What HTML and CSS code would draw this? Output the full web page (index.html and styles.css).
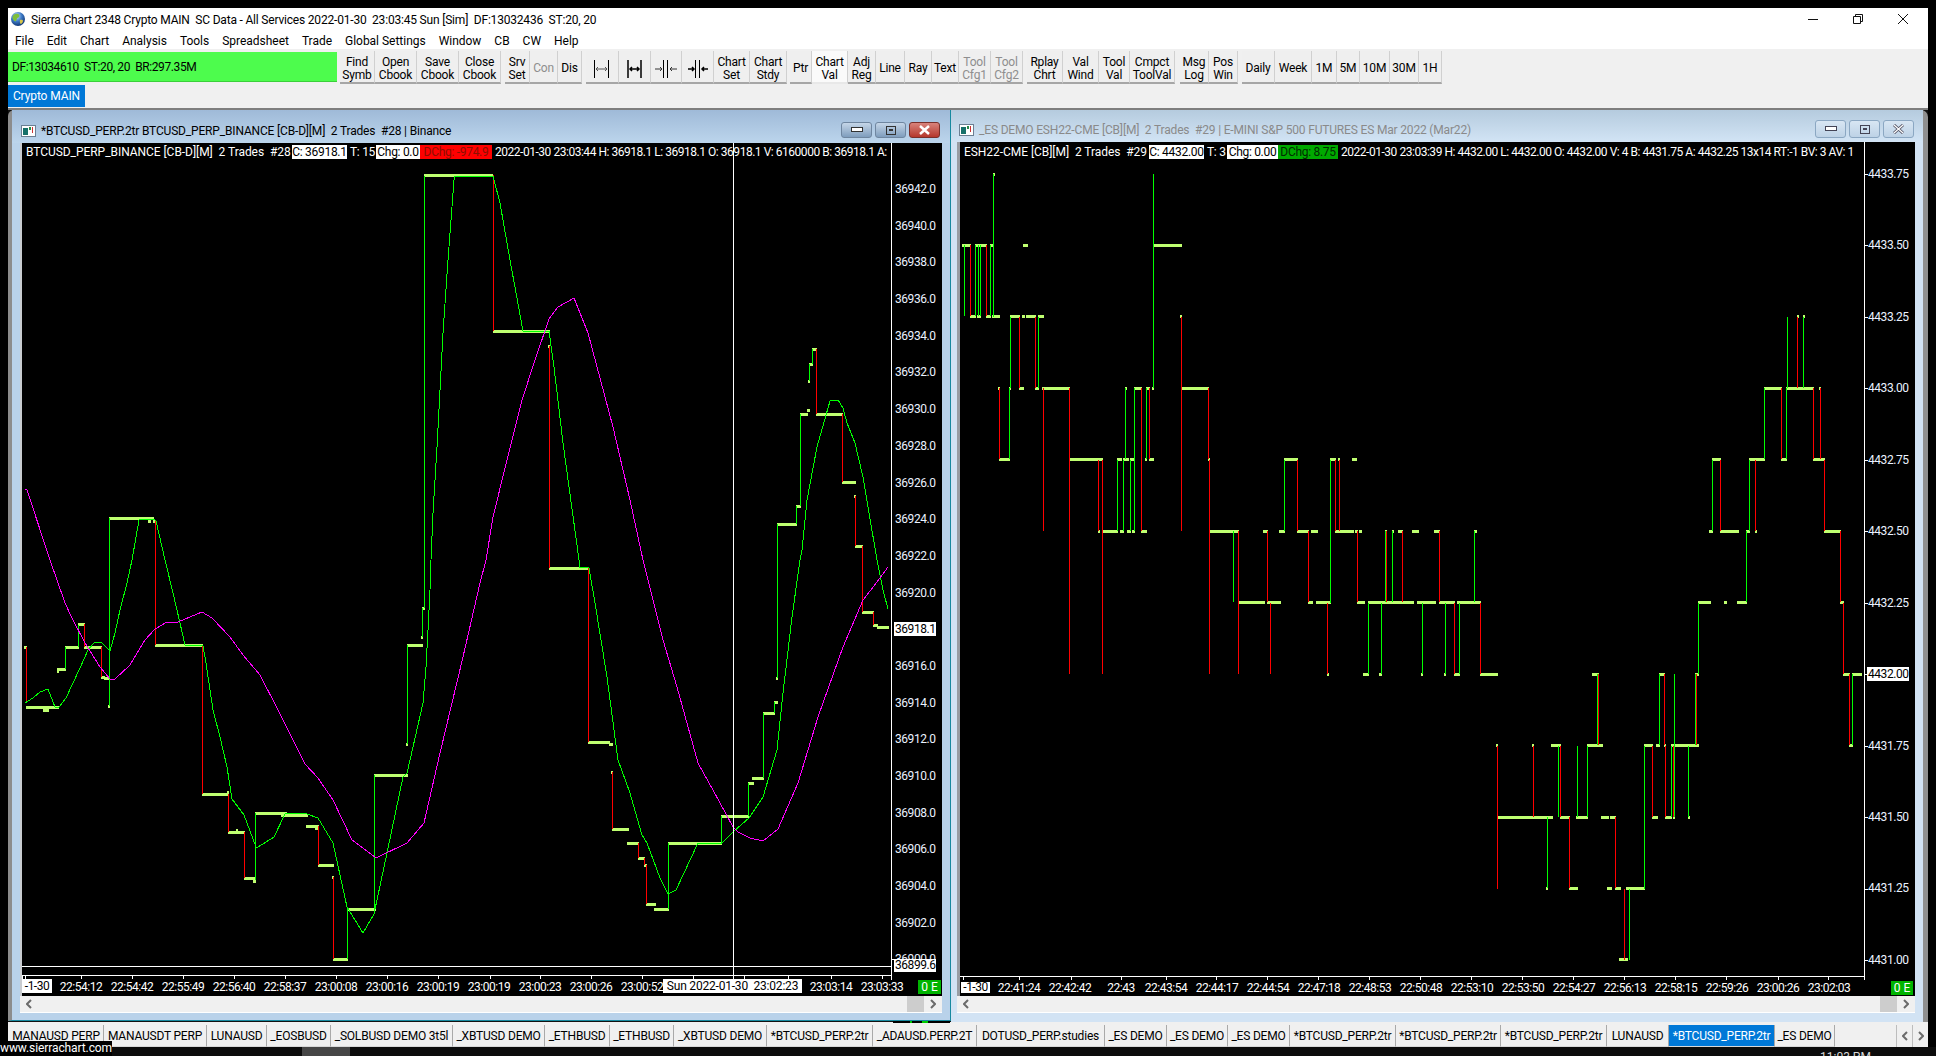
FILE: index.html
```html
<!DOCTYPE html>
<html lang="en">
<head>
<meta charset="utf-8">
<title>Sierra Chart</title>
<link rel="stylesheet" href="styles.css">
</head>
<body>
<div class="app">
  <header class="titlebar">
    <svg class="globe" viewBox="0 0 14 14" width="14" height="14"><defs><radialGradient id="gl" cx="40%" cy="30%" r="75%"><stop offset="0" stop-color="#cfe8ff"/><stop offset=".5" stop-color="#3b78c4"/><stop offset="1" stop-color="#0d2f6b"/></radialGradient></defs><circle cx="7" cy="7" r="7" fill="url(#gl)"/><path d="M3 2.500c2-1 4-1 5 0 1 1.500 0 3-1.500 3.500-1 .5-.5 2.500-2 3.500C3 9 1.500 7 1.500 5.500 1.500 4.500 2 3.500 3 2.500z" fill="#7fbf3a"/><path d="M9 8c1.500-.5 3 0 3 1s-1.500 3-2.500 3C9 11 8.500 9 9 8z" fill="#d8c64a"/></svg>
    <span class="app-title">Sierra Chart 2348 Crypto MAIN  SC Data - All Services 2022-01-30  23:03:45 Sun [Sim]  DF:13032436  ST:20, 20</span>
    <div class="winctl">
      <svg class="wc wc-min" viewBox="0 0 10 10" width="10" height="10"><path d="M0 5.500h10" /></svg>
      <svg class="wc wc-max" viewBox="0 0 10 10" width="10" height="10"><path d="M.5 2.500h7v7h-7zM2.500 2.500v-2h7v7h-2" /></svg>
      <svg class="wc wc-x" viewBox="0 0 10 10" width="10" height="10"><path d="M0 0l10 10M10 0L0 10" /></svg>
    </div>
  </header>
  <nav class="menubar">
    <span>File</span><span>Edit</span><span>Chart</span><span>Analysis</span><span>Tools</span><span>Spreadsheet</span><span>Trade</span><span>Global Settings</span><span>Window</span><span>CB</span><span>CW</span><span>Help</span>
  </nav>
  <section class="toolarea">
    <div class="toolbar">
      <div class="status">DF:13034610  ST:20, 20  BR:297.35M</div><i></i>
      <button>Find<br>Symb</button><button>Open<br>Cbook</button><button>Save<br>Cbook</button><button>Close<br>Cbook</button><i></i>
      <button>Srv<br>Set</button><button class="off">Con</button><button>Dis</button><i></i>
      <button><svg class="tb" viewBox="0 0 20 18" width="20" height="18"><path d="M2.500 0v18M16.500 0v18" stroke="#000"/><path d="M4 9h11M6 7l-2 2 2 2M13 7l2 2-2 2" stroke="#555"/></svg></button>
      <button><svg class="tb" viewBox="0 0 20 18" width="20" height="18"><path d="M3 0v18M16 0v18" stroke="#000" stroke-width="1.500"/><path d="M5 9h9M7 7l-2 2 2 2M12 7l2 2-2 2" stroke="#000" stroke-width="1.500"/></svg></button>
      <button><svg class="tb" viewBox="0 0 24 18" width="24" height="18"><path d="M9.500 0v18M13.500 0v18" stroke="#000"/><path d="M1 9h7M6 7l2 2-2 2M23 9h-7M18 7l-2 2 2 2" stroke="#333"/></svg></button>
      <button><svg class="tb" viewBox="0 0 24 18" width="24" height="18"><path d="M9.500 0v18M13.500 0v18" stroke="#000"/><path d="M2 9h6M6 7l2 2-2 2M22 9h-6M18 7l-2 2 2 2" stroke="#000" stroke-width="1.500"/></svg></button>
      <button>Chart<br>Set</button><button>Chart<br>Stdy</button><i></i>
      <button>Ptr</button><button class="on">Chart<br>Val</button><button>Adj<br>Reg</button><button>Line</button><button>Ray</button><button>Text</button><button class="off">Tool<br>Cfg1</button><button class="off">Tool<br>Cfg2</button><i></i>
      <button>Rplay<br>Chrt</button><button>Val<br>Wind</button><button>Tool<br>Val</button><button>Cmpct<br>ToolVal</button><i></i>
      <button>Msg<br>Log</button><button>Pos<br>Win</button><i></i>
      <button>Daily</button><button>Week</button><button>1M</button><button>5M</button><button>10M</button><button>30M</button><button>1H</button>
    </div>
    <div class="mdi-tabs"><span class="mdi-tab">Crypto MAIN</span></div>
  </section>

  <main class="workspace">
    <article class="win win-l">
      <div class="win-title">
        <svg class="win-ico" viewBox="0 0 15 12" width="15" height="12"><rect x=".5" y=".5" width="14" height="11" fill="#fff" stroke="#6b7f93"/><rect x="2" y="3" width="5" height="7" fill="#16706a"/><rect x="8" y="2" width="2" height="3" fill="#2a8a4a"/><rect x="11" y="2" width="1" height="6" fill="#c33"/></svg>
        <span class="win-text">*BTCUSD_PERP.2tr BTCUSD_PERP_BINANCE [CB-D][M]  2 Trades  #28 | Binance</span>
        <div class="win-btns">
          <span class="wb"><svg viewBox="0 0 12 6" width="12" height="6"><rect x=".5" y=".5" width="11" height="4" fill="#fff" stroke="#333"/></svg></span>
          <span class="wb"><svg viewBox="0 0 10 9" width="10" height="9"><rect x=".5" y=".5" width="9" height="8" fill="none" stroke="#333"/><rect x="3" y="3" width="4" height="2" fill="#333"/></svg></span>
          <span class="wb wb-x"><svg viewBox="0 0 11 10" width="11" height="10"><path d="M1 1l9 8M10 1l-9 8" stroke="#fff" stroke-width="2.500"/></svg></span>
        </div>
      </div>
      <div class="chart chart-l">
        <svg id="plot-l" class="plot" viewBox="22 143 920 853" width="920" height="853"></svg>
        <div class="hdr hdr-l">
          <span class="h-name">BTCUSD_PERP_BINANCE [CB-D][M]  2 Trades  #28</span><span class="h-box">C: 36918.1</span><span class="h-t">T: 15</span><span class="h-box">Chg: 0.0</span><span class="h-box h-red">DChg: -974.9</span><span class="h-rest">2022-01-30 23:03:44 H: 36918.1 L: 36918.1 O: 36918.1 V: 6160000 B: 36918.1 A:</span>
        </div>
        <div class="prices prices-l">
          <div>36942.0</div><div>36940.0</div><div>36938.0</div><div>36936.0</div><div>36934.0</div><div>36932.0</div><div>36930.0</div><div>36928.0</div><div>36926.0</div><div>36924.0</div><div>36922.0</div><div>36920.0</div><div><b>36918.1</b></div><div>36916.0</div><div>36914.0</div><div>36912.0</div><div>36910.0</div><div>36908.0</div><div>36906.0</div><div>36904.0</div><div>36902.0</div><div>36900.0</div>
          <b class="cross-price">36899.6</b>
        </div>
        <div class="times times-l">
          <span class="t-first">-1-30</span>
          <span>22:54:12</span><span>22:54:42</span><span>22:55:49</span><span>22:56:40</span><span>22:58:37</span><span>23:00:08</span><span>23:00:16</span><span>23:00:19</span><span>23:00:19</span><span>23:00:23</span><span>23:00:26</span><span>23:00:52</span>
          <span class="t-cross">Sun 2022-01-30  23:02:23</span>
          <span>23:03:14</span><span>23:03:33</span>
          <span class="t-oe">0 E</span>
        </div>
      </div>
      <div class="sbar">
        <span class="sb-arrow"><svg viewBox="0 0 6 10" width="6" height="10"><path d="M5 1L1 5l4 4"/></svg></span>
        <span class="sb-track"><span class="sb-thumb"></span></span>
        <span class="sb-arrow"><svg viewBox="0 0 6 10" width="6" height="10"><path d="M1 1l4 4-4 4"/></svg></span>
      </div>
    </article>

    <article class="win win-r">
      <div class="win-title">
        <svg class="win-ico" viewBox="0 0 15 12" width="15" height="12"><rect x=".5" y=".5" width="14" height="11" fill="#fff" stroke="#6b7f93"/><rect x="2" y="3" width="5" height="7" fill="#16706a"/><rect x="8" y="2" width="2" height="3" fill="#2a8a4a"/><rect x="11" y="2" width="1" height="6" fill="#c33"/></svg>
        <span class="win-text">_ES DEMO ESH22-CME [CB][M]  2 Trades  #29 | E-MINI S&amp;P 500 FUTURES ES Mar 2022 (Mar22)</span>
        <div class="win-btns">
          <span class="wb"><svg viewBox="0 0 12 6" width="12" height="6"><rect x=".5" y=".5" width="11" height="4" fill="#fff" stroke="#445"/></svg></span>
          <span class="wb"><svg viewBox="0 0 10 9" width="10" height="9"><rect x=".5" y=".5" width="9" height="8" fill="none" stroke="#445"/><rect x="3" y="3" width="4" height="2" fill="#445"/></svg></span>
          <span class="wb"><svg viewBox="0 0 11 10" width="11" height="10"><path d="M1 1l9 8M10 1l-9 8" stroke="#556" stroke-width="3"/><path d="M1 1l9 8M10 1l-9 8" stroke="#fff" stroke-width="1.200"/></svg></span>
        </div>
      </div>
      <div class="chart chart-r">
        <svg id="plot-r" class="plot" viewBox="960 142 955 854" width="955" height="854"></svg>
        <div class="hdr hdr-r">
          <span class="h-name">ESH22-CME [CB][M]  2 Trades  #29</span><span class="h-box">C: 4432.00</span><span class="h-t">T: 3</span><span class="h-box">Chg: 0.00</span><span class="h-box h-green">DChg: 8.75</span><span class="h-rest">2022-01-30 23:03:39 H: 4432.00 L: 4432.00 O: 4432.00 V: 4 B: 4431.75 A: 4432.25 13x14 RT:-1 BV: 3 AV: 1</span>
        </div>
        <div class="prices prices-r">
          <div>4433.75</div><div>4433.50</div><div>4433.25</div><div>4433.00</div><div>4432.75</div><div>4432.50</div><div>4432.25</div><div><b>4432.00</b></div><div>4431.75</div><div>4431.50</div><div>4431.25</div><div>4431.00</div>
        </div>
        <div class="times times-r">
          <span class="t-first">-1-30</span>
          <span>22:41:24</span><span>22:42:42</span><span>22:43</span><span class="t-tight">22:43:54</span><span>22:44:17</span><span>22:44:54</span><span>22:47:18</span><span>22:48:53</span><span>22:50:48</span><span>22:53:10</span><span>22:53:50</span><span>22:54:27</span><span>22:56:13</span><span>22:58:15</span><span>22:59:26</span><span>23:00:26</span><span>23:02:03</span>
          <span class="t-oe">0 E</span>
        </div>
      </div>
      <div class="sbar">
        <span class="sb-arrow"><svg viewBox="0 0 6 10" width="6" height="10"><path d="M5 1L1 5l4 4"/></svg></span>
        <span class="sb-track"><span class="sb-thumb"></span></span>
        <span class="sb-arrow"><svg viewBox="0 0 6 10" width="6" height="10"><path d="M1 1l4 4-4 4"/></svg></span>
      </div>
    </article>
    <div class="peek"></div>
  </main>

  <footer class="sheet-tabs">
    <div class="sheets">
      <span>MANAUSD PERP</span><span>MANAUSDT PERP</span><span>LUNAUSD</span><span>_EOSBUSD</span><span>_SOLBUSD DEMO 3t5l</span><span>_XBTUSD DEMO</span><span>_ETHBUSD</span><span>_ETHBUSD</span><span>_XBTUSD DEMO</span><span>*BTCUSD_PERP.2tr</span><span>_ADAUSD.PERP.2T</span><span>DOTUSD_PERP.studies</span><span>_ES DEMO</span><span>_ES DEMO</span><span>_ES DEMO</span><span>*BTCUSD_PERP.2tr</span><span>*BTCUSD_PERP.2tr</span><span>*BTCUSD_PERP.2tr</span><span>LUNAUSD</span><span class="sheet-on">*BTCUSD_PERP.2tr</span><span>_ES DEMO</span>
    </div>
    <div class="sheet-nav">
      <span><svg viewBox="0 0 6 10" width="6" height="10"><path d="M5 1L1 5l4 4"/></svg></span>
      <span><svg viewBox="0 0 6 10" width="6" height="10"><path d="M1 1l4 4-4 4"/></svg></span>
    </div>
  </footer>
  <div class="osbar"><span class="os-patch"></span><span class="os-clock">11:03 PM</span></div>
</div>
<div class="watermark">www.sierrachart.com</div>
<script src="charts.js"></script>
</body>
</html>
```
FILE: styles.css
```css
* { box-sizing: border-box; }
html, body { margin: 0; padding: 0; background: #000; }
body { width: 1936px; height: 1056px; overflow: hidden; position: relative; font: 12px/14px Roboto, "Liberation Sans", sans-serif; color: #000; }
.app { height: 1056px; padding: 8px 8px 0; display: flex; flex-direction: column; }

.titlebar { height: 22px; background: #fff; display: flex; align-items: center; padding-left: 3px; flex: none; }
.globe { flex: none; }
.app-title { margin: 2px 0 0 6px; white-space: pre; letter-spacing: -.19px; }
.winctl { margin-left: auto; display: flex; padding-right: 20px; gap: 35px; }
.wc { fill: none; stroke: #111; stroke-width: 1; display: block; }

.menubar { height: 19px; background: #fff; display: flex; gap: 13px; padding: 2px 0 0 7px; align-items: center; flex: none; letter-spacing: -.02px; }

.toolarea { background: #f0f0f0; flex: none; height: 59px; padding-top: 2px; }
.toolbar { display: grid; height: 33px; grid-template-columns: 329px 3px 35px 42px 42px 42px 4px 25px 28px 24px 4px 33px 32px 31px 32px 36px 37px 3px 22px 36px 28px 29px 27px 27px 32px 32px 4px 36px 36px 31px 45px 5px 29px 29px 4px 33px 37px 25px 23px 30px 29px 23px; }
.toolbar i { display: block; }
.toolbar button { display: block; margin: 0; padding: 4px 0 0; border: 0; border-right: 1px solid #d0d0d0; border-bottom: 2px solid #a6a6a6; background: #efefef; font: 12px/13px Roboto, "Liberation Sans", sans-serif; letter-spacing: -.2px; color: #000; text-align: center; white-space: nowrap; }
.toolbar button.off { color: #8e8e8e; }
.toolbar button.on { background: #fafafa; border-bottom-color: #e8e8e8; }
.tb { fill: none; display: block; margin: 0 auto; }
.status { margin-top: 1px; height: 30px; background: #4dfc4d; padding-left: 4px; display: flex; align-items: center; white-space: pre; letter-spacing: -.4px; border-bottom: 1px solid #3ad03a; }

.mdi-tabs { height: 22px; margin-top: 1px; display: flex; }
.mdi-tab { width: 77px; background: #0078d7; color: #fff; text-align: center; line-height: 22px; letter-spacing: -.1px; }

.workspace { position: relative; flex: 1; border-top: 2px solid #7e7e7e; background: #111; }
.win { position: absolute; top: 0; display: flex; flex-direction: column; }
.win-l { left: 0; width: 943px; height: 911px; border-left: 4px solid #8c8c8c; border-right: 1px solid #17899f; border-bottom: 1px solid #17899f; border-top-left-radius: 6px; background: #b9d2ea; padding: 0 8px; }
.win-r { left: 943px; width: 977px; height: 912px; border-right: 5px solid #8f8f8f; border-top-right-radius: 7px; background: #d2e3f4; padding: 0 8px 8px 6px; }
.win-l .win-title { margin: 0 -8px; padding: 9px 10px 0 9px; height: 33px; background: linear-gradient(#9fbad8, #bcd5ec); }
.win-r .win-title { margin: 0 -8px 0 -6px; padding: 8px 9px 0 8px; height: 32px; background: linear-gradient(#b5cbde, #d2e4f5); color: #8a8a8a; }
.win-title { display: flex; align-items: center; flex: none; }
.win-ico { flex: none; }
.win-text { margin-left: 5px; white-space: pre; letter-spacing: -.17px; }
.win-btns { margin-left: auto; display: flex; gap: 3px; }
.win-l .win-btns { margin-top: -2px; }
.win-r .win-btns { margin-top: -2px; }
.wb { width: 31px; height: 16px; border: 1px solid #6f86a0; border-radius: 3px; background: linear-gradient(#c5d6e8, #7f9dbd); display: flex; align-items: center; justify-content: center; }
.wb svg { display: block; }
.wb-x { background: linear-gradient(#d8837b, #b5372c); border-color: #7a2f2a; }
.win-r .wb { height: 18px; background: linear-gradient(#d8e6f3, #bdd2e6); border-color: #8ba7c2; }

.chart { position: relative; background: #000; flex: none; overflow: hidden; }
.chart-l { width: 922px; height: 853px; border-left: 2px solid #c9ccd0; }
.chart-r { width: 958px; height: 854px; border-left: 3px solid #989da3; }
.plot { position: absolute; left: 0; top: 0; display: block; shape-rendering: crispEdges; }
.plot .hb { fill: #bfff70; }
.plot .up { fill: #00ff00; }
.plot .dn { fill: #ff0000; }
.plot .wl { fill: #ffffff; }
.plot .ma { fill: none; stroke-width: 1; }
.plot .ma-g { stroke: #00ff00; }
.plot .ma-m { stroke: #ff00ff; }

.hdr { position: absolute; left: 0; top: 2px; height: 14px; display: grid; color: #fff; white-space: pre; line-height: 14px; overflow: hidden; }
.hdr-l { width: 869px; padding-left: 4px; grid-template-columns: 266px 55px 29px 44px 72px 1fr; }
.hdr-r { width: 904px; padding-left: 4px; top: 3px; grid-template-columns: 185px 55px 23px 51px 60px 1fr; }
.h-name { letter-spacing: -.05px; overflow: hidden; }
.h-box { background: #fff; color: #000; text-align: center; overflow: hidden; letter-spacing: -.3px; }
.h-t { padding-left: 3px; letter-spacing: -.3px; }
.hdr .h-red { background: #ff0000; color: #8c0f00; }
.hdr .h-green { background: #00a900; color: #002c00; }
.h-rest { padding-left: 3px; overflow: hidden; letter-spacing: -.47px; }

.prices { position: absolute; color: #eaf2ff; letter-spacing: -.45px; }
.prices div { white-space: nowrap; }
.prices b { font-weight: 400; background: #fff; color: #000; padding: 0 1px; margin-left: -1px; }
.prices-l { left: 873px; top: 28px; }
.prices-l div { height: 36.7px; line-height: 36.7px; }
.prices-r { left: 908px; top: -3px; }
.prices-r div { height: 71.45px; line-height: 71.45px; }
.cross-price { position: absolute; left: 0; top: 788px; line-height: 13px; display: block; }

.times { position: absolute; left: 0; display: flex; height: 16px; color: #fff; line-height: 16px; letter-spacing: -.5px; width: 100%; }
.times span { flex: 0 0 51px; text-align: center; white-space: pre; }
.times-l { top: 836px; }
.times-r { top: 838px; }
.times .t-first { background: #fff; color: #000; flex: 0 0 30px; height: 14px; line-height: 14px; overflow: hidden; }
.times-l .t-first { margin-right: 3.5px; }
.times-r .t-first { flex-basis: 29px; margin: 2px 3.5px 0 1px; height: 11px; line-height: 11px; }
.times .t-cross { background: #fff; color: #000; flex: 0 0 139px; margin: 0 3.5px 0 -4.5px; height: 14px; line-height: 14px; letter-spacing: -.2px; }
.times .t-tight { margin-left: -6px; }
.times .t-oe { flex: 0 0 23px; background: #00b400; color: #fff; height: 14px; line-height: 14px; margin: 1px 0 0 10.5px; letter-spacing: 0; }
.times-r .t-oe { margin-left: auto; margin-right: 2px; flex-basis: 22px; }

.sbar { flex: none; height: 17px; background: #f0f0f0; border-bottom: 1px solid #fff; display: flex; width: 922px; }
.win-r .sbar { width: 958px; }
.sb-arrow { flex: 0 0 18px; display: flex; align-items: center; justify-content: center; }
.sb-arrow svg, .sheet-nav svg { fill: none; stroke: #6b6b6b; stroke-width: 2; }
.sb-track { flex: 1; display: flex; justify-content: flex-end; }
.sb-thumb { width: 17px; background: #cdcdcd; }
.peek { position: absolute; left: 885px; top: 911px; width: 57px; height: 2px; background: linear-gradient(90deg, #000 0 30%, #0c0 30% 34%, #000 34% 50%, #0c0 50% 62%, #000 62%); }

.sheet-tabs { height: 25px; flex: none; background: #f0f0f0; padding: 3px 0 0 1px; display: flex; justify-content: space-between; }
.sheets { display: grid; height: 22px; grid-template-columns: 95px 103px 60px 64px 122px 92px 65px 64px 93px 106px 104px 128px 62px 61px 62px 106px 105px 106px 62px 106px 60px; }
.sheets span { background: #f0f0f0; border-right: 1px solid #a9a9a9; border-bottom: 1px solid #d8d8d8; text-align: center; line-height: 23px; letter-spacing: -.2px; white-space: nowrap; overflow: hidden; }
.sheets .sheet-on { background: #0078d7; color: #fff; }
.sheet-nav { display: flex; height: 22px; }
.sheet-nav span { width: 16px; border-left: 1px solid #bdbdbd; display: flex; align-items: center; justify-content: center; }

.osbar { height: 9px; flex: none; margin: 0 -8px; background: #0c0c0c; position: relative; overflow: hidden; }
.os-patch { position: absolute; left: 302px; top: 0; width: 48px; height: 9px; background: #464646; }
.os-clock { position: absolute; left: 1820px; top: 3px; color: #d8d8d8; }
.watermark { position: absolute; left: 0; top: 1041px; width: 112px; height: 15px; background: #000; color: #fff; line-height: 15px; letter-spacing: -.1px; white-space: nowrap; }
```
FILE: charts.js
```js
(function () {
  var NS = 'http://www.w3.org/2000/svg';
  function add(svg, name, attrs) {
    var el = document.createElementNS(NS, name);
    for (var k in attrs) el.setAttribute(k, attrs[k]);
    svg.appendChild(el);
    return el;
  }
  function hbar(svg, x1, x2, y) {
    add(svg, 'rect', { 'class': 'hb', x: Math.round(x1), y: Math.round(y - 1.5), width: Math.max(2, Math.round(x2 - x1)), height: 3 });
  }
  function vbar(svg, x, y1, y2, c) {
    add(svg, 'rect', { 'class': c, x: Math.round(x - 0.5), y: Math.round(y1), width: 1, height: Math.round(y2 - y1) });
  }
  function line(svg, cls, pts) {
    add(svg, 'polyline', { 'class': 'ma ' + cls, points: pts.map(function (p) { return p[0] + ',' + p[1]; }).join(' ') });
  }
  function white(svg, x, y, w, h) { add(svg, 'rect', { 'class': 'wl', x: x, y: y, width: w, height: h }); }

  /* ---------- left chart: BTCUSD_PERP ---------- */
  var L = document.getElementById('plot-l');
  var lh = [[24,27,647],[26,59,707],[43,49,710],[57,66,669],[57,59,671],[65,79,647],[78,85,624],[84,102,647],[101,105,677],[104,109,678],[108,110,706],
    [109,154,518],[148,151,521],[153,156,521],[155,203,645],[202,228,794],[227,229,792],[228,245,832],[236,238,830],[244,256,878],[253,256,881],[255,287,813],[281,308,815],[306,319,826],[315,319,828],[318,334,865],[332,334,877],[333,348,959],[347,376,909],[374,408,775],[406,408,744],[407,423,645],[421,423,637],[422,425,608],
    [424,493,175],[493,550,331],[548,550,346],[549,589,568],[588,610,742],[609,613,744],[611,613,772],[612,629,829],[627,639,843],[638,645,858],[644,647,865],[646,656,904],[654,669,909],[668,722,843],[721,749,816],[748,754,783],[752,764,778],[763,775,713],[774,778,702],[776,778,678],[777,797,524],[796,801,506],[800,808,414],[807,810,410],[808,810,381],[809,813,364],[812,817,349],[816,843,414],[842,856,482],[854,856,496],[855,863,546],[862,874,612],[873,878,625],[877,889,627]];
  var lv = [[26.5,647,703,'dn'],[65.7,647,669,'up'],[78.7,625,647,'up'],[84.3,624,647,'dn'],[101,647,677,'dn'],[109.3,518,706,'up'],[155.3,520,645,'dn'],[202.3,645,794,'dn'],[228.3,794,832,'dn'],[244.3,832,878,'dn'],[255.3,813,880,'up'],[318.3,826,865,'dn'],[333.3,877,959,'dn'],[347.3,909,959,'up'],[374.7,775,909,'up'],[407,645,744,'up'],[422,608,637,'up'],[424.3,176,608,'up'],
    [493.7,175,331,'dn'],[549.3,346,568,'dn'],[588.3,568,742,'dn'],[612.3,772,829,'dn'],[638.3,843,858,'dn'],[644.7,858,865,'dn'],[646.3,865,904,'dn'],[668.3,843,909,'up'],[721.3,816,843,'up'],[748.7,783,816,'up'],[763.7,713,778,'up'],[774.7,702,713,'up'],[777,524,678,'up'],[796.7,506,524,'up'],[800.7,414,506,'up'],[809.3,364,381,'up'],[812.3,349,364,'up'],[816.3,349,414,'dn'],[842.3,414,482,'dn'],[855.3,496,546,'dn'],[862.3,546,612,'dn'],[873.3,612,625,'dn']];
  lh.forEach(function (b) { hbar(L, b[0], b[1], b[2]); });
  lv.forEach(function (b) { vbar(L, b[0], b[1], b[2], b[3]); });
  line(L, 'ma-g', [[25,703],[33,698],[40,692],[48,689],[55,707],[59,707],[66,698],[73,683],[80,668],[88,650],[94,643],[101,642],[106,647],[110,651],[115,633],[120,610],[127,583],[132,560],[139,520],[140,519],[154,519],[156,521],[165,560],[173,593],[180,623],[185,645],[203,646],[206,663],[213,710],[220,737],[227,767],[232,799],[235,803],[244,815],[256,847],[258,847],[274,837],[285,814],[287,813],[307,814],[318,818],[333,843],[347,907],[363,933],[374,914],[387,853],[403,777],[407,773],[413,747],[423,703],[426,667],[428,630],[430,590],[431,560],[433,513],[437,447],[443,333],[448,260],[454,180],[455,176],[493,176],[500,203],[510,260],[523,331],[549,331],[554,367],[563,443],[579,560],[579,567],[589,568],[595,603],[607,677],[618,760],[630,793],[642,835],[647,843],[660,878],[668,894],[676,890],[698,843],[722,843],[733,832],[749,818],[763,797],[777,750],[783,693],[792,617],[800,560],[802,550],[807,500],[817,447],[830,401],[838,400],[843,408],[847,423],[855,443],[863,477],[868,507],[877,560],[883,590],[888,609]]);
  line(L, 'ma-m', [[25,489],[27,490],[50,560],[65,603],[72,618],[85,643],[100,667],[110,679],[115,679],[130,665],[145,640],[155,629],[167,622],[178,622],[202,612],[212,618],[230,637],[243,655],[260,675],[277,708],[305,764],[318,778],[333,800],[352,840],[375,857],[378,857],[407,843],[424,823],[440,753],[463,657],[480,583],[486,560],[493,517],[507,460],[522,400],[535,360],[549,319],[558,307],[574,298],[588,333],[613,427],[630,500],[643,560],[663,640],[677,687],[698,763],[713,790],[733,827],[738,832],[750,838],[763,841],[778,829],[798,783],[818,717],[843,647],[863,600],[877,582],[888,567]]);
  white(L, 733, 143, 1, 837);
  white(L, 891, 143, 1, 837);
  white(L, 22, 966, 869, 1);
  white(L, 22, 975, 869, 1);
  [81,132,183,234,285,336,387,438,490,540,591,642,693,744,788,831,882].forEach(function (x) { white(L, x, 975, 1, 4); });
  white(L, 22, 975, 1, 4); white(L, 25, 975, 1, 4);
  white(L, 892, 959, 3, 1);

  /* ---------- right chart: ESH22-CME ---------- */
  var R = document.getElementById('plot-r');
  function lvl(n) { return 174 + 71.45 * n; }
  function zA(x) { return 950 + x / 2.8; }
  function zB(x) { return 1400 + x / 2.925; }
  var rhA = { 0: [[120,126]],
    1: [[34,59],[70,104],[112,121],[204,218],[568,650]],
    2: [[56,73],[76,87],[101,115],[118,140],[168,196],[202,211],[213,241],[246,263],[644,650]],
    3: [[134,140],[165,171],[193,207],[238,249],[258,336],[490,496],[515,538],[549,560],[566,571],[647,725]],
    4: [[137,168],[333,428],[468,482],[484,501],[504,515],[546,552],[557,571],[722,728],[935,974],[1064,1081],[1086,1092],[1126,1140]],
    5: [[414,420],[426,470],[476,487],[496,507],[510,518],[535,552],[725,809],[876,890],[921,938],[972,1005],[1011,1030],[1078,1131],[1134,1142],[1145,1154],[1218,1224],[1238,1243]],
    6: [[806,882],[888,927],[1002,1016],[1025,1067],[1140,1162],[1170,1263]],
    7: [[1056,1061],[1156,1173],[1201,1210]] };
  var rhB = {
    2: [[1160,1167],[1178,1185]],
    3: [[1065,1117],[1129,1211],[1226,1232]],
    4: [[913,939],[1021,1068],[1115,1132],[1208,1243]],
    5: [[-5,10],[35,56],[99,117],[216,225],[904,916],[936,992],[1012,1024],[1038,1044],[1240,1290]],
    6: [[0,42],[50,105],[114,161],[167,237],[872,910],[948,958],[986,1016],[1287,1299]],
    7: [[62,67],[130,135],[158,176],[234,287],[562,582],[758,775],[863,875],[1296,1316],[1322,1352]],
    8: [[281,287],[386,392],[442,471],[548,594],[715,740],[749,761],[772,778],[793,875],[1314,1325]],
    9: [[284,448],[468,497],[515,550],[588,611],[614,632],[737,755],[775,796],[799,804],[841,846]],
    10: [[427,433],[494,521],[606,620],[629,647],[661,717]],
    11: [[641,667]] };
  function drawH(set, z) {
    Object.keys(set).forEach(function (n) {
      set[n].forEach(function (b) { hbar(R, z(b[0]), z(b[1]), lvl(+n)); });
    });
  }
  drawH(rhA, zA); drawH(rhB, zB);
  /* x (zoom units), from level, to level, g/r */
  var rvA = 'g40 1 2,r57 1 2,g71 1 2,g79 1 2,g85 1 2,r102 1 2,g113 1 2,g121 0 2,r138 3 4,g166 3 4,g169 2 3,r194 2 3,r239 2 3,g247 2 3,r261 3 5,r334 3 7,r416 4 5,r426 4 7,g468 4 5,g485 4 5,g491 3 4,g505 4 5,g516 3 5,r536 3 5,g550 3 4,r558 3 4,g569 0 3,r648 2 5,r723 3 4,r726 4 7,g793 5 6,r807 5 7,r888 5 6,r897 6 7,g936 4 5,r972 4 5,r1003 5 6,g1065 4 6,r1056 6 7,r1079 4 5,r1090 4 5,r1140 5 6,g1171 6 7,g1208 6 7,g1219 5 6,r1222 5 6,g1239 5 6';
  var rvB = 'r7 5 6,g65 6 7,r115 5 6,g133 6 7,r159 6 7,g174 6 7,g217 5 6,r235 6 7,r285 8 10,r390 8 9,g431 9 10,g464 8 9,r469 8 9,r495 9 10,g519 8 9,g548 8 9,g578 7 8,r580 7 8,r630 9 10,r656 10 11,g671 10 11,g715 8 10,r738 8 9,g759 7 8,r773 7 8,r776 8 9,g795 8 9,r801 8 9,g803 7 9,g844 8 9,g865 7 8,r867 7 8,g873 6 7,g914 4 5,r937 4 5,g1013 5 6,g1022 4 5,r1040 4 5,g1066 3 4,r1116 3 4,g1130 3 4,g1133 2 3,r1164 2 3,g1180 2 3,r1209 3 4,r1229 3 4,r1241 4 5,r1288 5 6,r1297 6 7,r1315 7 8,g1323 7 8';
  function drawV(str, z) {
    str.split(',').forEach(function (s) {
      var c = s.charAt(0) === 'g' ? 'up' : 'dn';
      var p = s.slice(1).split(' ').map(Number);
      vbar(R, z(p[0]), lvl(p[1]), lvl(p[2]), c);
    });
  }
  drawV(rvA, zA); drawV(rvB, zB);
  white(R, 1864, 142, 1, 838);
  white(R, 960, 976, 904, 1);
  [963,1019,1071,1121,1166,1216,1267,1318,1369,1420,1471,1522,1573,1624,1675,1726,1778,1828].forEach(function (x) { white(R, x, 976, 1, 4); });
  for (var j = 0; j < 12; j++) { white(R, 1865, Math.round(lvl(j)), 3, 1); }
})();
```
